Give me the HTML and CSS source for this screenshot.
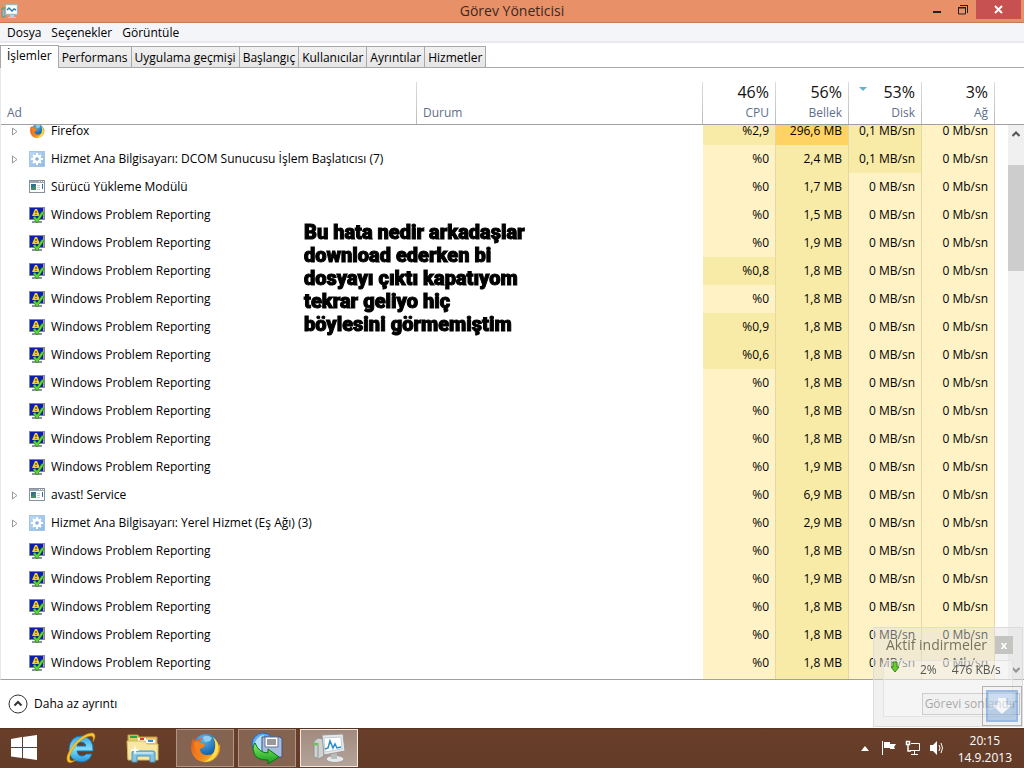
FILE: index.html
```
<!DOCTYPE html>
<html lang="tr">
<head>
  <meta charset="UTF-8">
  <meta name="viewport" content="width=device-width, initial-scale=1.0">
  <title>Görev Yöneticisi</title>
  <link rel="stylesheet" href="styles.css">
</head>
<body>

<!-- Shared icons -->
<svg class="icon-defs" aria-hidden="true">
  <linearGradient id="fox-fire" x1="0" y1="0" x2="1" y2="1">
    <stop offset="0" stop-color="#e8541c"/>
    <stop offset="0.6" stop-color="#f08a1e"/>
    <stop offset="1" stop-color="#ffd93a"/>
  </linearGradient>
  <radialGradient id="fox-globe" cx="0.4" cy="0.2" r="0.9">
    <stop offset="0" stop-color="#5fb8ea"/>
    <stop offset="0.6" stop-color="#1d6db3"/>
    <stop offset="1" stop-color="#123a72"/>
  </radialGradient>
  <linearGradient id="arrow-green" x1="0" y1="0" x2="0" y2="1">
    <stop offset="0" stop-color="#8df06a"/>
    <stop offset="1" stop-color="#0c9a1a"/>
  </linearGradient>
  <linearGradient id="ie-blue" x1="0" y1="0" x2="0" y2="1">
    <stop offset="0" stop-color="#3aa5e6"/>
    <stop offset="0.5" stop-color="#7fdcfb"/>
    <stop offset="1" stop-color="#2596dc"/>
  </linearGradient>
  <linearGradient id="service-blue" x1="0" y1="0" x2="1" y2="1">
    <stop offset="0" stop-color="#bcd9f3"/>
    <stop offset="1" stop-color="#8fb9e2"/>
  </linearGradient>

  <symbol id="icon-firefox" viewBox="0 0 32 32">
    <circle cx="17" cy="15" r="13" fill="url(#fox-globe)"/>
    <path d="M14 5q5-3 9 1l-2 3-5 1z" fill="#8fd0f0"/>
    <path d="M4 6q1 2 3 3 3-3 7-3-3 2-3 5l5 1-1 3-4 2q0 5 6 6 8 1 10-7 1-6-4-11 6 3 7 9l1-2q1 11-7 16-9 5-17-1Q-1 19 4 6z" fill="url(#fox-fire)"/>
    <path d="M24 5q7 6 5 14-3 10-14 11 7-3 10-10 3-8-1-15z" fill="#ffdf45"/>
    <path d="M5 10q5-2 6 1l4 1q1 2-4 4-2 3 1 6-7-1-7-12z" fill="#f7821b"/>
  </symbol>

  <symbol id="icon-service" viewBox="0 0 16 16">
    <rect x="0.5" y="0.5" width="15" height="15" fill="url(#service-blue)" stroke="#a5c6e8"/>
    <path d="M8 2v12M2 8h12M4 4l8 8M12 4l-8 8" stroke="#fff" stroke-width="2"/>
    <circle cx="8" cy="8" r="4.2" fill="#fff"/>
    <circle cx="8" cy="8" r="1.8" fill="#86b2de"/>
  </symbol>

  <symbol id="icon-app" viewBox="0 0 16 16">
    <rect x="0.5" y="1.5" width="15" height="12" fill="#fff" stroke="#89929a"/>
    <path d="M1 2h14v2H1z" fill="#9ca9b4"/>
    <path d="M10 2.5h1m1 0h1m1 0h1" stroke="#fff"/>
    <rect x="2" y="5" width="5" height="6" fill="#2f7390"/>
    <path d="M2 9q3 0 5-3v5H2z" fill="#458e65"/>
    <path d="M8 6.5h3M8 8.5h3M8 10.5h3" stroke="#c2c9ce"/>
    <path d="M13.5 5v5" stroke="#34699a"/>
  </symbol>

  <symbol id="icon-report" viewBox="0 0 16 16">
    <rect x="0.5" y="0.5" width="15" height="12" fill="#9a9f98" stroke="#85898a"/>
    <rect x="1" y="1" width="13" height="11" fill="#0b1fb0"/>
    <path d="M6 13h4v1h3v2H3v-2h3z" fill="#8b9298"/>
    <path d="M6 2h2l3 7H3z" fill="#f5cf20"/>
    <path d="M7 4v2m0 1v1" stroke="#333"/>
    <path d="M5 10l3 4 6-9" fill="none" stroke="#1d7a16" stroke-width="3"/>
    <path d="M5 10l3 4 6-9" fill="none" stroke="#5bdb35" stroke-width="2"/>
  </symbol>

  <symbol id="icon-monitor" viewBox="0 0 32 32">
    <path d="M1 9l4-3 6 1v17l-5 3-5-2z" fill="#cfd2d1" stroke="#8e9290"/>
    <path d="M5 11v15" stroke="#8b908e"/>
    <circle cx="3" cy="12" r="1.5" fill="#42d922"/>
    <ellipse cx="22" cy="27" rx="9" ry="3.500" fill="#e8e8e8" stroke="#999"/>
    <path d="M18 20h6v7h-6z" fill="#b9bdbc"/>
    <path d="M9 3l21-1 2 17-21 4z" fill="#e7e9e8" stroke="#999"/>
    <path d="M11 6l17-1 1 12-17 3z" fill="#fff" stroke="#c2cdd4"/>
    <path d="M12 17l3-1 2-7 3 7 2-4 2 4 4-1" fill="none" stroke="#288cce" stroke-width="1.5"/>
  </symbol>
</svg>

<main class="window">
  <header class="title-bar">
    <svg class="title-icon" viewBox="0 0 18 16" aria-hidden="true">
      <path d="M1 5h3v9H1z" fill="#aab6ba" stroke="#75868b"/>
      <path d="M2 5h1v2H2z" fill="#36c925"/>
      <rect x="4.500" y="1.500" width="12" height="10" fill="#e8f0f2" stroke="#a5b7bd"/>
      <path d="M6 3h9v7H6z" fill="#fff"/>
      <path d="M6 7l2-2 3 3 2-2 2 1" fill="none" stroke="#2586b8" stroke-width="1.500"/>
      <path d="M9 12h4v2h2v1H7v-1h2z" fill="#c2d0d3"/>
    </svg>
    <h1>Görev Yöneticisi</h1>
    <div class="window-buttons">
      <button aria-label="Simge durumuna küçült"><svg width="10" height="10" viewBox="0 0 10 10"><path d="M1 6h8v2H1z" fill="#222"/></svg></button>
      <button aria-label="Önceki boyut"><svg width="10" height="10" viewBox="0 0 10 10"><path d="M0.500 3h7v6h-7z" fill="none" stroke="#222"/><path d="M0 2h8v1H0zM2 0h8v8H9V1H2z" fill="#222"/></svg></button>
      <button class="close-button" aria-label="Kapat"><svg width="10" height="10" viewBox="0 0 10 10"><path d="M1 1l7 7M8 1L1 8" stroke="#fff" stroke-width="2"/></svg></button>
    </div>
  </header>

  <nav class="menu-bar">
    <button>Dosya</button>
    <button>Seçenekler</button>
    <button>Görüntüle</button>
  </nav>

  <nav class="tabs">
    <button class="active">İşlemler</button>
    <button>Performans</button>
    <button>Uygulama geçmişi</button>
    <button>Başlangıç</button>
    <button>Kullanıcılar</button>
    <button>Ayrıntılar</button>
    <button>Hizmetler</button>
  </nav>

  <section class="process-view">
    <div class="process-list" id="process-list">
      <table>
        <thead>
          <tr>
            <th class="col-name">Ad</th>
            <th class="col-status">Durum</th>
            <th class="col-usage"><span class="total">46%</span>CPU</th>
            <th class="col-usage"><span class="total">56%</span>Bellek</th>
            <th class="col-usage sorted"><span class="total">53%</span>Disk</th>
            <th class="col-usage"><span class="total">3%</span>Ağ</th>
            <th class="col-end"></th>
          </tr>
        </thead>
        <tbody id="process-rows"></tbody>
        <tfoot>
          <tr>
            <td colspan="2"></td>
            <td class="usage"></td>
            <td class="usage medium"></td>
            <td class="usage"></td>
            <td class="usage"></td>
            <td></td>
          </tr>
        </tfoot>
      </table>
    </div>
    <div class="scrollbar">
      <button aria-label="Yukarı"><svg width="8" height="6" viewBox="0 0 8 6"><path d="M0.500 5L4 1.500 7.500 5" fill="none" stroke="#555" stroke-width="2"/></svg></button>
      <div class="scroll-thumb"></div>
      <button aria-label="Aşağı"><svg width="8" height="6" viewBox="0 0 8 6"><path d="M0.500 1L4 4.500 7.500 1" fill="none" stroke="#555" stroke-width="2"/></svg></button>
    </div>
    <p class="note">Bu hata nedir arkadaşlar<br>download ederken bi<br>dosyayı çıktı kapatıyom<br>tekrar geliyo hiç<br>böylesini görmemiştim</p>
  </section>

  <footer class="bottom-bar">
    <button class="details-button">
      <svg width="20" height="20" viewBox="0 0 20 20"><circle cx="10" cy="10" r="9" fill="#fff" stroke="#333"/><path d="M6.500 11.500L10 8l3.500 3.500" fill="none" stroke="#333" stroke-width="2"/></svg>
      Daha az ayrıntı
    </button>
    <button class="end-button" disabled>Görevi sonlandır</button>
  </footer>

  <!-- Download manager gadget -->
  <aside class="downloads">
    <div class="downloads-head">
      <h2>Aktif indirmeler</h2>
      <button aria-label="Kapat">x</button>
    </div>
    <div class="downloads-body">
      <svg width="10" height="12" viewBox="0 0 10 12"><path d="M3 1h4v5h2l-4 5-4-5h2z" fill="#65ce27" stroke="#39851c"/></svg>
      <span class="percent">2%</span>
      <span class="speed">476 KB/s</span>
    </div>
    <div class="drop-target">
      <svg width="32" height="32" viewBox="0 0 32 32"><rect x="1" y="1" width="30" height="30" fill="#8fb2dc" stroke="#5f96d8" stroke-width="2"/><path d="M3 3h26v10L3 20z" fill="#b3cdea"/><path d="M12 8h8v7h6L16 24 6 15h6z" fill="#f4f8fc"/></svg>
    </div>
  </aside>
</main>

<footer class="taskbar">
  <button class="task" aria-label="Başlat">
    <svg width="28" height="26" viewBox="0 0 28 26"><path d="M1 4l11-2v10H1zM13 2l14-2v12H13zM1 13h11v10L1 21.500zM13 13h14v12l-14-2z" fill="#fff"/></svg>
  </button>
  <button class="task" aria-label="Internet Explorer">
    <svg width="32" height="32" viewBox="0 0 32 32">
      <path d="M28 19H12q1 5 5 5 3 0 4-2h6q-3 8-11 8Q4 29 4 17 5 4 17 4q12 2 11 15zm-7-5q-1-4-5-4t-4 4z" fill="url(#ie-blue)" stroke="#1678b8"/>
      <path d="M3 30Q-1 25 9 12 20 0 28 1q4 2 0 9 1-6-2-6-6 0-14 8Q3 23 5 28q1 2 6 0-5 4-8 2z" fill="#f8c72d" stroke="#c18a12" stroke-width="0.500"/>
    </svg>
  </button>
  <button class="task" aria-label="Dosya Gezgini">
    <svg width="34" height="32" viewBox="0 0 34 32">
      <path d="M2 3h10l1 2h18v22H2z" fill="#eac967" stroke="#bd9b3d"/>
      <path d="M4 4h7v2H4z" fill="#21ad3c"/><path d="M12 6h8v3h-8z" fill="#fff"/><path d="M14 6h4v2h-4z" fill="#d43b2e"/>
      <path d="M1 9h18l2 3h11v16H2z" fill="#f8e7a2" stroke="#d3b659"/>
      <path d="M20 8h9v3h-9z" fill="#fff"/><path d="M22 8h5v2h-5z" fill="#2a92d8"/>
      <path d="M6 30V21q0-2 2-2h19q2 0 2 2v9h-5v-6H11v6z" fill="#83c4e5" stroke="#4b97bf"/>
      <path d="M8 21h19" stroke="#b9e2f4" stroke-width="2"/>
      <path d="M9 13l1 4 4 1-4 1-1 4-1-4-4-1 4-1z" fill="#fff"/>
    </svg>
  </button>
  <button class="task open" aria-label="Firefox"><svg width="32" height="32"><use href="#icon-firefox"/></svg></button>
  <button class="task open" aria-label="İndirme Yöneticisi">
    <svg width="32" height="32" viewBox="0 0 32 32">
      <circle cx="12" cy="12" r="11" fill="#5ea9ed" stroke="#2368be"/>
      <path d="M4 10q4-7 9-7l-2 17q-6-3-7-10z" fill="#b8e1ff"/>
      <path d="M11 5h18l2 2v18H11z" fill="#a9bcdc" stroke="#3f5484"/>
      <path d="M14 5h13v10H14z" fill="#fff" stroke="#61749b"/>
      <path d="M16 8h9m-9 2h9m-9 2h9" stroke="#333"/>
      <path d="M4 11Q8 21 17 21v-4l11 8-11 7v-4Q3 29 2 17q0-4 2-6z" fill="url(#arrow-green)" stroke="#08750e"/>
    </svg>
  </button>
  <button class="task open current" aria-label="Görev Yöneticisi"><svg width="32" height="32"><use href="#icon-monitor"/></svg></button>

  <div class="tray">
    <button aria-label="Gizli simgeleri göster"><svg width="8" height="5" viewBox="0 0 8 5"><path d="M0 5l4-5 4 5z" fill="#fff"/></svg></button>
    <button aria-label="İşlem Merkezi"><svg width="16" height="16" viewBox="0 0 16 16"><path d="M1 1h1v14H1z" fill="#fff"/><path d="M3 2h6v2h6l-2 3 1 2H9V8H3z" fill="#fff"/></svg></button>
    <button aria-label="Ağ"><svg width="16" height="16" viewBox="0 0 16 16" fill="none" stroke="#fff"><path d="M6 3.500h8.500v7H5M9.500 11v3M6 14.500h7"/><path d="M1.500 1.500h3v3h-3zM3 5v6h3" stroke-width="1.500"/></svg></button>
    <button aria-label="Ses"><svg width="16" height="16" viewBox="0 0 16 16"><path d="M1 5h3l4-4v14l-4-4H1z" fill="#fff"/><path d="M10 5q2 3 0 6m2-8q3 5 0 10" fill="none" stroke="#fff"/></svg></button>
    <div class="clock"><time>20:15</time><time>14.9.2013</time></div>
  </div>
</footer>

<script src="script.js"></script>
</body>
</html>
```
FILE: styles.css
```
* {
  box-sizing: border-box;
}

body {
  margin: 0;
  height: 100vh;
  display: flex;
  flex-direction: column;
  background-color: white;
  color: #000;
  font-family: "Open Sans", "Noto Sans", sans-serif;
  font-size: 12px;
  line-height: 16px;
  overflow: hidden;
}

button {
  margin: 0;
  padding: 0;
  border: none;
  background: none;
  color: inherit;
  font: inherit;
  white-space: nowrap;
}

svg {
  display: block;
  flex: none;
}

.icon-defs {
  position: absolute;
  width: 0;
  height: 0;
}

.window {
  position: relative;
  flex: 1;
  min-height: 0;
  display: flex;
  flex-direction: column;
}

/* Title bar */
.title-bar {
  height: 23px;
  display: grid;
  grid-template-columns: 1fr auto 1fr;
  align-items: center;
  background-color: #e89067;
  border-bottom: 1px solid #c67b57;
}

.title-icon {
  width: 18px;
  height: 16px;
  margin-left: 1px;
}

.title-bar h1 {
  margin: 0;
  font-size: 14px;
  font-weight: normal;
  color: #3b2a22;
}

.window-buttons {
  justify-self: end;
  align-self: start;
  display: flex;
  margin-right: 3px;
}

.window-buttons button {
  width: 26px;
  height: 19px;
  display: flex;
  align-items: center;
  justify-content: center;
}

.window-buttons .close-button {
  width: 45px;
  background-color: #c75050;
}

/* Menu and tabs */
.menu-bar {
  height: 20px;
  display: flex;
  align-items: center;
  gap: 10px;
  padding: 1px 0 0 7px;
  background-color: #f4f5f8;
  border-bottom: 2px solid #e9eaec;
}

.tabs {
  height: 25px;
  display: flex;
  align-items: flex-end;
  border-bottom: 1px solid #a8a8a8;
}

.tabs button {
  height: 21px;
  padding: 1px 3px 0;
  border: 1px solid #a8a8a8;
  border-left-width: 0;
  border-bottom: none;
  background: linear-gradient(#f1f1f1, #e5e5e5);
}

.tabs .active {
  height: 23px;
  margin-bottom: -1px;
  padding: 0 6px 2px;
  border-left-width: 1px;
  background: white;
}

/* Process table */
.process-view {
  position: relative;
  flex: 1;
  min-height: 0;
  display: flex;
  border-left: 1px solid #e8e8e8;
  border-bottom: 1px solid #a0a0a0;
}

.process-list {
  flex: 1;
  overflow: hidden;
}

table {
  width: 100%;
  table-layout: fixed;
  border-collapse: separate;
  border-spacing: 0;
}

th {
  position: sticky;
  top: 0;
  height: 57px;
  padding: 0 6px 3px;
  background: linear-gradient(#ddd, #bbb) right bottom / 1px 42px no-repeat, white;
  border-bottom: 1px solid #a0a0a0;
  color: #5d6f8b;
  font-weight: normal;
  text-align: left;
  vertical-align: bottom;
}

th .total {
  display: block;
  margin-bottom: 3px;
  color: #111;
  font-size: 16px;
  line-height: 20px;
}

.col-name {
  width: 416px;
}

.col-usage {
  width: 73px;
  padding-right: 7px;
  text-align: right;
}

.col-end {
  width: 13px;
  background: white;
}

.sorted::before {
  content: "";
  position: absolute;
  top: 19px;
  left: 10px;
  border: 4px solid transparent;
  border-top-color: #69b1d3;
  border-bottom: none;
}

td {
  height: 28px;
  padding: 0 6px;
  white-space: nowrap;
}

.process {
  display: flex;
  align-items: center;
}

.process button,
.process .spacer {
  width: 22px;
  padding-left: 5px;
}

.process .icon {
  width: 16px;
  height: 16px;
  margin-right: 6px;
}

.usage {
  background-color: #fff3c5;
  border-right: 1px solid #e8d7a3;
  text-align: right;
}

.usage.medium {
  background-color: #f8eba7;
}

.usage.high {
  background-color: #ffd264;
}

.scrollbar {
  width: 16px;
  margin-top: 56px;
  display: flex;
  flex-direction: column;
  background-color: #f0f0f0;
  border-top: 1px solid #a0a0a0;
}

.scrollbar button {
  height: 18px;
  display: flex;
  align-items: center;
  justify-content: center;
}

.scroll-thumb {
  height: 106px;
  margin: 22px 0 auto;
  background-color: #cdcdcd;
}

.note {
  position: absolute;
  top: 153px;
  left: 303px;
  margin: 0;
  color: black;
  font-family: Roboto, "Open Sans", sans-serif;
  font-size: 20px;
  font-weight: 900;
  line-height: 23px;
  -webkit-text-stroke: 1px black;
}

/* Bottom bar */
.bottom-bar {
  height: 48px;
  display: flex;
  align-items: center;
  justify-content: space-between;
  padding: 0 4px 0 8px;
}

.details-button {
  display: flex;
  align-items: center;
  gap: 6px;
}

.end-button {
  height: 22px;
  padding: 0 2px;
  background-color: #f4f4f4;
  border: 1px solid #999;
  color: #333;
}

/* Downloads gadget */
.downloads {
  position: absolute;
  right: 1px;
  bottom: 1px;
  width: 150px;
  height: 100px;
  padding: 2px 9px 9px;
  background-color: rgba(225, 225, 225, 0.45);
  border: 1px solid #dcdcdc;
}

.downloads-head {
  height: 30px;
  display: flex;
  align-items: center;
  justify-content: space-between;
  padding-left: 3px;
}

.downloads h2 {
  margin: 0;
  color: #77715f;
  font-size: 14px;
  font-weight: normal;
  white-space: nowrap;
}

.downloads-head button {
  width: 18px;
  height: 18px;
  background-color: #c4c4c0;
  color: white;
  font-size: 11px;
  font-weight: bold;
}

.downloads-body {
  height: 57px;
  display: flex;
  align-items: flex-start;
  padding: 0 6px;
  background-color: rgba(255, 255, 255, 0.3);
  border: 1px solid #e3e3e0;
  color: #555;
  white-space: nowrap;
}

.downloads-body .percent {
  margin-left: 20px;
}

.downloads-body .speed {
  margin-left: 15px;
}

.downloads-body span {
  padding-top: 1px;
}

.drop-target {
  position: absolute;
  right: 0;
  bottom: 0;
  padding: 3px;
  border: 1px solid #888;
  background-color: rgba(240, 240, 240, 0.3);
  opacity: 0.6;
}

/* Taskbar */
.taskbar {
  height: 40px;
  display: flex;
  align-items: center;
  gap: 4px;
  background: linear-gradient(#532e1d, #693f2a 2px, #633b27);
  color: white;
}

.task {
  width: 58px;
  height: 38px;
  display: flex;
  align-items: center;
  justify-content: center;
}

.task:first-child {
  width: 48px;
}

.task.open {
  background-color: #856351;
  border: 1px solid #ad9588;
}

.task.current {
  background: linear-gradient(#a28b7e, #b5a398);
  border-color: #f0e9e4;
}

.tray {
  margin-left: auto;
  display: flex;
  align-items: center;
  gap: 8px;
  padding-right: 12px;
}

.tray button:first-child {
  margin-right: 4px;
}

.clock {
  display: flex;
  flex-direction: column;
  align-items: center;
  margin-left: 5px;
  padding-top: 2px;
  line-height: 17px;
}
```
FILE: script.js
```
const wpr = 'Windows Problem Reporting';

// name, icon, expandable, cpu, memory, disk
const processes = [
  ['Firefox', 'firefox', true, '2,9', '296,6', '0,1'],
  ['Hizmet Ana Bilgisayarı: DCOM Sunucusu İşlem Başlatıcısı (7)', 'service', true, '0', '2,4', '0,1'],
  ['Sürücü Yükleme Modülü', 'app', false, '0', '1,7', '0'],
  [wpr, 'report', false, '0', '1,5', '0'],
  [wpr, 'report', false, '0', '1,9', '0'],
  [wpr, 'report', false, '0,8', '1,8', '0'],
  [wpr, 'report', false, '0', '1,8', '0'],
  [wpr, 'report', false, '0,9', '1,8', '0'],
  [wpr, 'report', false, '0,6', '1,8', '0'],
  [wpr, 'report', false, '0', '1,8', '0'],
  [wpr, 'report', false, '0', '1,8', '0'],
  [wpr, 'report', false, '0', '1,8', '0'],
  [wpr, 'report', false, '0', '1,9', '0'],
  ['avast! Service', 'app', true, '0', '6,9', '0'],
  ['Hizmet Ana Bilgisayarı: Yerel Hizmet (Eş Ağı) (3)', 'service', true, '0', '2,9', '0'],
  [wpr, 'report', false, '0', '1,8', '0'],
  [wpr, 'report', false, '0', '1,9', '0'],
  [wpr, 'report', false, '0', '1,8', '0'],
  [wpr, 'report', false, '0', '1,8', '0'],
  [wpr, 'report', false, '0', '1,8', '0']
];

const arrow = '<button aria-label="Genişlet"><svg width="6" height="9" viewBox="0 0 6 9"><path d="M0.5 1v7L5 4.500z" fill="none" stroke="#999"/></svg></button>';

function usageCell(text, level) {
  return `<td class="usage ${level}">${text}</td>`;
}

function renderProcesses() {
  document.getElementById('process-rows').innerHTML = processes.map(([name, icon, expandable, cpu, memory, disk]) => `
    <tr>
      <td colspan="2"><div class="process">
        ${expandable ? arrow : '<span class="spacer"></span>'}
        <svg class="icon"><use href="#icon-${icon}"/></svg>
        <span>${name}</span>
      </div></td>
      ${usageCell('%' + cpu, cpu === '0' ? '' : 'medium')}
      ${usageCell(memory + ' MB', parseFloat(memory) > 100 ? 'high' : 'medium')}
      ${usageCell(disk + ' MB/sn', disk === '0' ? '' : 'medium')}
      ${usageCell('0 Mb/sn', '')}
      <td></td>
    </tr>`).join('');
}

renderProcesses();
document.getElementById('process-list').scrollTop = 8;
```
